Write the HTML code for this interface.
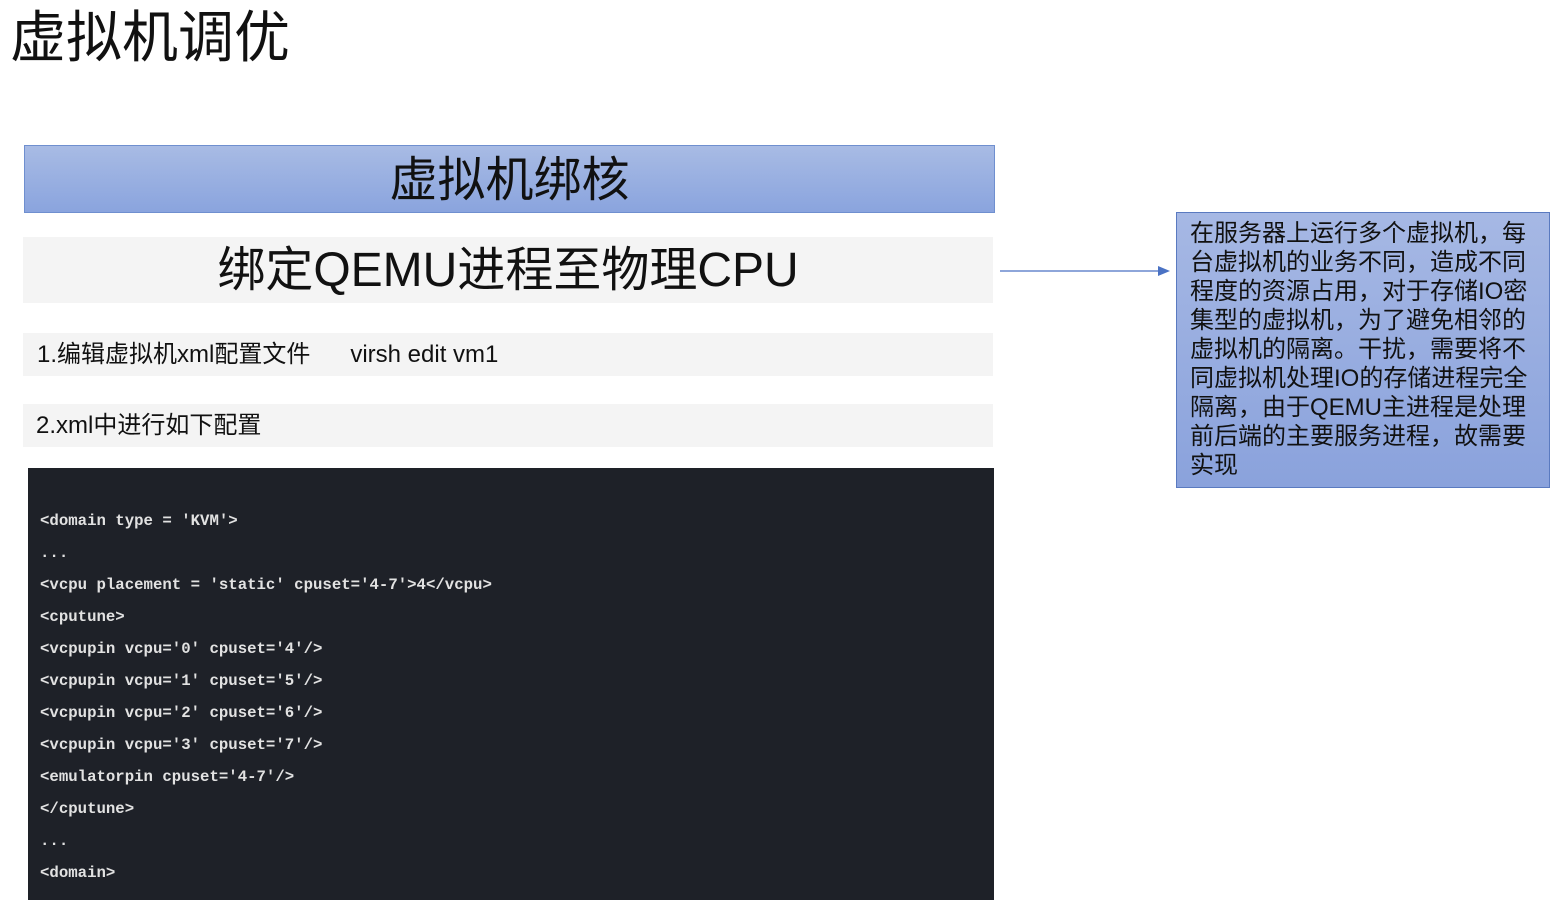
<!DOCTYPE html>
<html><head><meta charset="utf-8"><style>
body{margin:0;width:1566px;height:912px;background:#fff;position:relative;overflow:hidden;font-family:"Liberation Sans","Noto Sans CJK SC",sans-serif;color:#111}
.a{position:absolute}
.title{left:10px;top:3px;font-size:56px;line-height:70px;color:#111}
.band{left:24px;top:145px;width:969px;height:66px;border:1px solid #6f8fcf;background:linear-gradient(#a8bbe4,#8aa4de);text-align:center;font-size:48px;line-height:70px;color:#111}
.g{background:#f4f4f4}
.sub{left:23px;top:237px;width:970px;height:66px;text-align:center;font-size:48px;line-height:68px}
.l1{left:23px;top:333px;width:970px;height:43px;font-size:24px;line-height:44px;padding-left:14px;box-sizing:border-box}
.l2{left:23px;top:404px;width:970px;height:43px;font-size:24px;line-height:44px;padding-left:13px;box-sizing:border-box}
.code{left:28px;top:468px;width:966px;height:432px;background:#1e2128;color:#e2e2e2;font-family:"Liberation Mono","DejaVu Sans Mono",monospace;font-size:15.7px;font-weight:bold}
.code div{position:absolute;left:12px;white-space:pre}
.note{left:1176px;top:212px;width:374px;height:276px;border:1px solid #5a7ac0;background:linear-gradient(#a6b8e4,#8aa2dc);font-size:24px;line-height:29px;padding:6px 12px 0 13px;box-sizing:border-box;color:#111}
</style></head><body>
<div class="a title">虚拟机调优</div>
<div class="a band">虚拟机绑核</div>
<div class="a g sub">绑定QEMU进程至物理CPU</div>
<div class="a g l1">1.编辑虚拟机xml配置文件&nbsp;&nbsp;&nbsp;&nbsp;&nbsp; virsh edit vm1</div>
<div class="a g l2">2.xml中进行如下配置</div>
<svg class="a" style="left:998px;top:264px" width="175" height="14"><line x1="2" y1="7" x2="162" y2="7" stroke="#4a72c4" stroke-width="1.3"/><polygon points="160,2 172,7 160,12" fill="#4a72c4"/></svg>
<div class="a note">在服务器上运行多个虚拟机，每台虚拟机的业务不同，造成不同程度的资源占用，对于存储IO密集型的虚拟机，为了避免相邻的虚拟机的隔离。干扰，需要将不同虚拟机处理IO的存储进程完全隔离，由于QEMU主进程是处理前后端的主要服务进程，故需要实现</div>
<div class="a code">
<div style="top:44px">&lt;domain type = 'KVM'&gt;</div>
<div style="top:76px">...</div>
<div style="top:108px">&lt;vcpu placement = 'static' cpuset='4-7'&gt;4&lt;/vcpu&gt;</div>
<div style="top:140px">&lt;cputune&gt;</div>
<div style="top:172px">&lt;vcpupin vcpu='0' cpuset='4'/&gt;</div>
<div style="top:204px">&lt;vcpupin vcpu='1' cpuset='5'/&gt;</div>
<div style="top:236px">&lt;vcpupin vcpu='2' cpuset='6'/&gt;</div>
<div style="top:268px">&lt;vcpupin vcpu='3' cpuset='7'/&gt;</div>
<div style="top:300px">&lt;emulatorpin cpuset='4-7'/&gt;</div>
<div style="top:332px">&lt;/cputune&gt;</div>
<div style="top:364px">...</div>
<div style="top:396px">&lt;domain&gt;</div>
</div>
</body></html>
